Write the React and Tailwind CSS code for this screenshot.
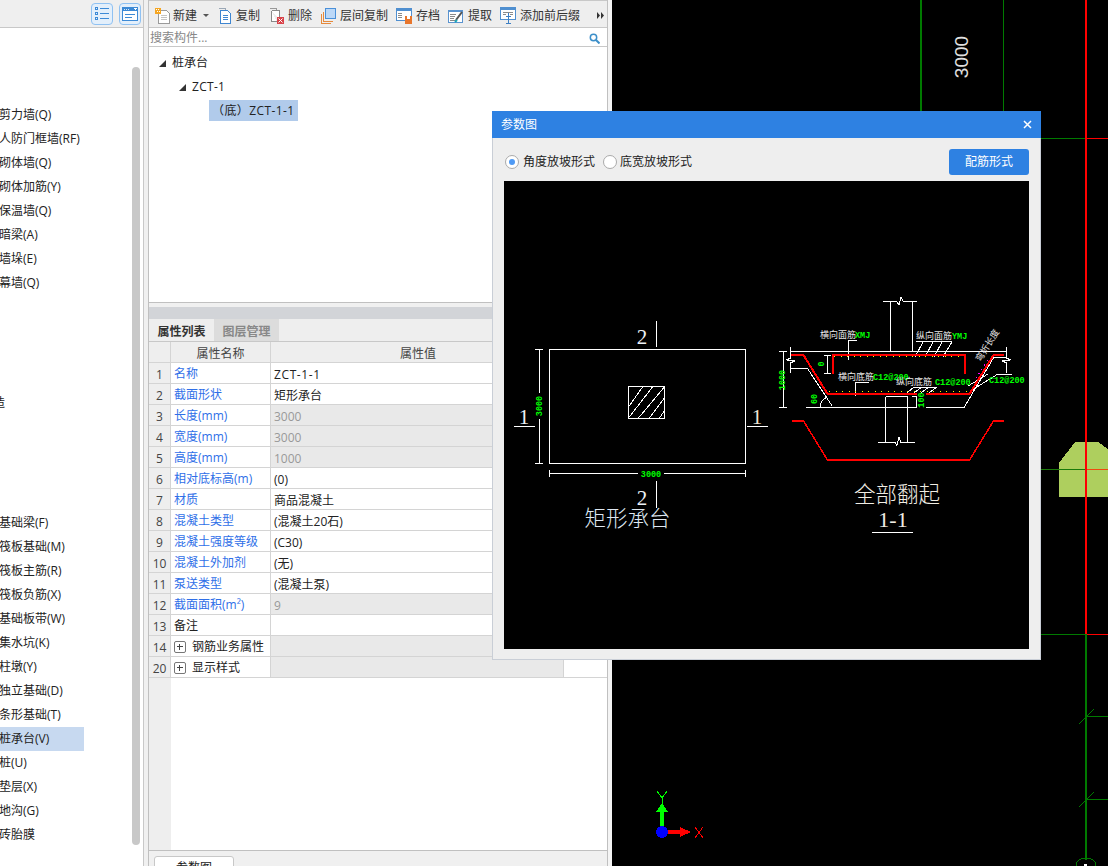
import React from 'react'

const LEFT_ROWS = [
  '剪力墙(Q)', '人防门框墙(RF)', '砌体墙(Q)', '砌体加筋(Y)', '保温墙(Q)', '暗梁(A)', '墙垛(E)', '幕墙(Q)',
  '', '', '', '', '造', '', '', '', '',
  '基础梁(F)', '筏板基础(M)', '筏板主筋(R)', '筏板负筋(X)', '基础板带(W)', '集水坑(K)', '柱墩(Y)', '独立基础(D)',
  '条形基础(T)', '桩承台(V)', '桩(U)', '垫层(X)', '地沟(G)', '砖胎膜',
]

const PROPS = [
  { n: 1, name: '名称', value: 'ZCT-1-1', wide: true },
  { n: 2, name: '截面形状', value: '矩形承台' },
  { n: 3, name: '长度(mm)', value: '3000', off: true },
  { n: 4, name: '宽度(mm)', value: '3000', off: true },
  { n: 5, name: '高度(mm)', value: '1000', off: true },
  { n: 6, name: '相对底标高(m)', value: '(0)' },
  { n: 7, name: '材质', value: '商品混凝土' },
  { n: 8, name: '混凝土类型', value: '(混凝土20石)' },
  { n: 9, name: '混凝土强度等级', value: '(C30)' },
  { n: 10, name: '混凝土外加剂', value: '(无)' },
  { n: 11, name: '泵送类型', value: '(混凝土泵)' },
  { n: 12, name: '截面面积(m²)', value: '9', off: true },
  { n: 13, name: '备注', value: '', black: true },
  { n: 14, name: '钢筋业务属性', group: true },
  { n: 20, name: '显示样式', group: true },
]

function IconNew() {
  return (
    <svg width="16" height="18" viewBox="0 0 16 18" shapeRendering="crispEdges">
      <path d="M3.5 3.5h8l3 3v10h-11z" fill="#fff" stroke="#9a9a9a" />
      <path d="M6 8.5h6M6 10.5h6M6 12.5h6" stroke="#c4c4c4" />
      <rect x="0" y="1" width="6" height="6" fill="#f5a623" />
      <path d="M1 2h1v1H1zM3 2h1v1H3zM2 4h1v1H2zM4 4h1v1H4z" fill="#fff" />
    </svg>
  )
}

function IconCopy() {
  return (
    <svg width="14" height="16" viewBox="0 0 14 16" shapeRendering="crispEdges">
      <path d="M0.5 0.5h7v2" fill="none" stroke="#9aa7b5" />
      <path d="M2.5 2.5h7l3 3v10h-10z" fill="#fff" stroke="#3f86d0" />
      <path d="M5 7.5h5M5 9.5h5M5 11.5h5" stroke="#3f86d0" />
    </svg>
  )
}

function IconDelete() {
  return (
    <svg width="15" height="16" viewBox="0 0 15 16" shapeRendering="crispEdges">
      <path d="M0.5 0.5h7v2" fill="none" stroke="#999" />
      <path d="M2.5 2.5h8v9M2.5 2.5v11h5" fill="#fff" stroke="#8a8a8a" />
      <rect x="8" y="9" width="7" height="7" fill="#d9434a" />
      <path d="M9.5 10.5l4 4M13.5 10.5l-4 4" stroke="#fff" shapeRendering="auto" />
    </svg>
  )
}

function IconFloorCopy() {
  return (
    <svg width="15" height="16" viewBox="0 0 15 16" shapeRendering="crispEdges">
      <path d="M0.5 6v9.5h9M2.5 4v9.5h9" fill="none" stroke="#e68a3c" />
      <rect x="4.5" y="0.5" width="10" height="10" fill="#bcd8f7" stroke="#4a90d9" />
    </svg>
  )
}

function IconSave() {
  return (
    <svg width="16" height="16" viewBox="0 0 16 16" shapeRendering="crispEdges">
      <rect x="0.5" y="0.5" width="15" height="12" fill="#fff" stroke="#4f8fd0" />
      <rect x="0" y="0" width="16" height="3" fill="#4f8fd0" />
      <path d="M2 5.5h4M2 7.5h4M2 9.5h4" stroke="#8a8a8a" />
      <rect x="9" y="8" width="7" height="8" fill="#e8762c" />
      <rect x="11" y="8" width="3" height="3" fill="#fff" />
    </svg>
  )
}

function IconExtract() {
  return (
    <svg width="16" height="16" viewBox="0 0 16 16" shapeRendering="crispEdges">
      <rect x="0.5" y="2.5" width="14" height="12" fill="#fff" stroke="#5a93cf" />
      <rect x="0" y="2" width="15" height="2" fill="#5a93cf" />
      <path d="M2 6.5h6M2 8.5h5M2 10.5h4M2 12.5h6" stroke="#8a8a8a" />
      <path d="M8 12l6-8" stroke="#555" strokeWidth="2" shapeRendering="auto" />
      <path d="M7 14l2-2" stroke="#19a8b8" strokeWidth="2" shapeRendering="auto" />
    </svg>
  )
}

function IconSuffix() {
  return (
    <svg width="16" height="17" viewBox="0 0 16 17" shapeRendering="crispEdges">
      <rect x="0.5" y="0.5" width="15" height="12" fill="#fff" stroke="#4f8fd0" />
      <rect x="0" y="0" width="16" height="3" fill="#4f8fd0" />
      <path d="M3 5.5h10M3 7.5h3M10 7.5h3" stroke="#8a8a8a" />
      <path d="M8.5 6v10M6 16.5h5M6 9.5h5" stroke="#3d7fc4" />
    </svg>
  )
}

function ToolItem({ icon, label, className }) {
  return (
    <div className={`flex items-center shrink-0 ${className}`}>
      {icon}
      <span className="whitespace-nowrap">{label}</span>
    </div>
  )
}

function Toolbar() {
  return (
    <div className="h-[28px] shrink-0 border-t border-b border-[#c8c8c8] bg-[#eeeeee] flex items-center text-[12px] text-[#333] pl-[6px] pt-[3px]">
      <ToolItem icon={<IconNew />} label="新建" className="gap-[2px] w-[48px]" />
      <svg width="6" height="4" viewBox="0 0 6 4" className="mr-[9px]"><path d="M0 0h6L3 3z" fill="#555" /></svg>
      <ToolItem icon={<IconCopy />} label="复制" className="gap-[4px] w-[51px]" />
      <ToolItem icon={<IconDelete />} label="删除" className="gap-[4px] w-[52px]" />
      <ToolItem icon={<IconFloorCopy />} label="层间复制" className="gap-[4px] w-[75px]" />
      <ToolItem icon={<IconSave />} label="存档" className="gap-[4px] w-[52px]" />
      <ToolItem icon={<IconExtract />} label="提取" className="gap-[4px] w-[52px]" />
      <ToolItem icon={<IconSuffix />} label="添加前后缀" className="gap-[4px] w-[97px]" />
      <svg width="7" height="7" viewBox="0 0 7 7"><path d="M0 0l3 3.5L0 7zM4 0l3 3.5L4 7z" fill="#333" /></svg>
    </div>
  )
}

function TreeArrow() {
  return (
    <svg width="7" height="7" viewBox="0 0 7 7" className="shrink-0"><path d="M7 0v7H0z" fill="#333" /></svg>
  )
}

function PropRow({ row }) {
  const valueBg = row.off || row.group ? 'bg-[#e9e9e9]' : 'bg-white'
  const nameColor = row.group || row.black ? 'text-[#222]' : 'text-[#2f6fe8]'
  return (
    <div className="flex h-[21px] shrink-0 border-b border-[#d4d4d4] leading-[23px]">
      <div className="w-[22px] shrink-0 bg-[#eeeeee] border-r border-[#d4d4d4] text-center text-[#444]">{row.n}</div>
      <div className={`w-[100px] shrink-0 border-r border-[#d4d4d4] bg-white whitespace-nowrap overflow-hidden flex items-center pl-[3px] pt-[1px] ${nameColor}`}>
        {row.group && (
          <span className="w-[12px] h-[12px] border border-[#777] rounded-[2px] mr-[6px] flex items-center justify-center shrink-0">
            <svg width="6" height="6" viewBox="0 0 6 6" shapeRendering="crispEdges"><path d="M0 2.5h6M2.5 0v6" stroke="#444" /></svg>
          </span>
        )}
        {row.name}
      </div>
      {row.group ? (
        <>
          <div className="w-[293px] shrink-0 bg-[#e9e9e9] border-r border-[#d4d4d4]" />
          <div className="flex-1 bg-white" />
        </>
      ) : (
        <div className={`flex-1 pl-[3px] ${valueBg} ${row.off ? 'text-[#999]' : 'text-[#222]'} ${row.wide ? 'tracking-[0.6px]' : ''}`}>{row.value}</div>
      )}
    </div>
  )
}

function CanvasLines() {
  return (
    <svg className="block w-full h-full" viewBox="612 0 496 866" shapeRendering="crispEdges">
      <path d="M921 0v111" stroke="#007a00" strokeWidth="2" fill="none" />
      <path d="M1003.5 0v111" stroke="#007a00" strokeWidth="1" fill="none" />
      <path d="M1041 138.5h45" stroke="#007a00" fill="none" />
      <path d="M1086 138.5h22" stroke="#ff0000" fill="none" />
      <polygon points="1059,463 1075,442 1098,442 1108,449 1108,497 1059,497" fill="#aecf5e" />
      <path d="M1041 469.5h45" stroke="#1a7a0a" fill="none" />
      <path d="M1086 469.5h22" stroke="#f04a10" fill="none" />
      <path d="M1086 0v634" stroke="#ff0000" strokeWidth="2" fill="none" />
      <path d="M1041 634.5h45" stroke="#007a00" fill="none" />
      <path d="M1086 634.5h22" stroke="#ff0000" fill="none" />
      <path d="M1086 634v226" stroke="#007a00" strokeWidth="2" fill="none" />
      <path d="M1086 716.5h22M1079 724l15-15M1086 799.5h22M1079 807l15-15" stroke="#007a00" fill="none" />
      <path d="M1076 866c0-5 4-8 10-8s10 3 10 8" stroke="#007a00" fill="none" />
      <rect x="1084" y="864" width="3" height="2" fill="#fff" />
      <text x="968" y="57" textAnchor="middle" transform="rotate(-90 968 57)" className="fill-[#e0e0e0] text-[19px] font-['Liberation_Sans',sans-serif]">3000</text>

      <path d="M660 826v-14h-4l6-9 6 9h-4v14z" fill="#00ff00" />
      <path d="M657 791l5 7 5-7M662 798v6" stroke="#00ff00" fill="none" />
      <path d="M668 830h12v-3l11 5-11 5v-3h-12z" fill="#ff0000" />
      <circle cx="662" cy="832" r="6" fill="#0000ff" />
      <path d="M695 827l8 11M703 827l-8 11" stroke="#ff0000" fill="none" />
    </svg>
  )
}

function ParamDrawing() {
  const cadText = "font-['Liberation_Serif','Noto_Sans_CJK_SC',serif]"
  const cjkText = "font-['Noto_Sans_CJK_SC',sans-serif]"
  const dimText = "fill-[#00ff00] font-['Liberation_Mono',monospace] font-bold text-[8.5px]"
  const noteText = `fill-[#e8e8e8] ${cjkText} text-[9px]`
  return (
    <svg className="block w-[525px] h-[468px]" viewBox="504 181 525 468" shapeRendering="crispEdges">
      {/* 矩形承台 plan */}
      <g stroke="#fff" fill="none">
        <rect x="549.5" y="349.5" width="196" height="114" />
        <rect x="628.5" y="386.5" width="36" height="32" />
        <path d="M656.5 321v26M656.5 481v27M514 426.5h21M747 426.5h21" />
        <path d="M539.5 349v115M535 349.5h8M535 463.5h8M549 473.5h197M549.5 470v7M745.5 470v7" />
        <path d="M628.5 407l14-20M628.5 418l24-31M638 418.5l26-31M649 418.5l15-20M659 418.5l5-7" strokeWidth="1" />
      </g>
      <rect x="534" y="393" width="11" height="26" fill="#000" />
      <rect x="638" y="469" width="26" height="9" fill="#000" />
      <text x="542" y="406" textAnchor="middle" transform="rotate(-90 542 406)" className={dimText}>3000</text>
      <text x="651" y="477" textAnchor="middle" className={dimText}>3000</text>
      <text x="642" y="344" textAnchor="middle" className={`fill-[#eef2f7] text-[21px] ${cadText}`}>2</text>
      <text x="642" y="505" textAnchor="middle" className={`fill-[#eef2f7] text-[21px] ${cadText}`}>2</text>
      <text x="524" y="424" textAnchor="middle" className={`fill-[#eef2f7] text-[21px] ${cadText}`}>1</text>
      <text x="757" y="424" textAnchor="middle" className={`fill-[#f0e6d6] text-[21px] ${cadText}`}>1</text>
      <text x="627.5" y="526" textAnchor="middle" className={`fill-[#dfe8f2] text-[21.5px] ${cjkText} font-light`}>矩形承台</text>

      {/* 1-1 section */}
      <g stroke="#fff" fill="none">
        <path d="M883 301.5h13.5l2.5 3.5 2-8 2.5 4.5h13.5" />
        <path d="M890.5 302v49M912.5 302v49" />
        <path d="M790.5 351.5h216" />
        <path d="M783.5 352v55M779 351.5h8M779 407.5h8" />
        <path d="M790.5 347v11l-4 2 8 1-4 2v10M790 368.5h17.5l25 38" />
        <path d="M806 407.5h158l30-50.5h12.5M1006.5 347v11l4 2-8 1 4 2v10" />
        <path d="M885.5 397v46M907.5 397v46M885.5 396.5h22" />
        <path d="M878 442.5h17l2 3 2-8 2 5h14" />
        <path d="M916.5 397v10M912 396.5h8" />
        <path d="M827.5 355v18M824 355.5h7M824 373.5h7" />
        <path d="M820 407c0-4 3-8 7-10" />
        <path d="M848.5 360v-19.5h8" />
        <path d="M916 341.5h36M915 357l8-15M925 357l8-15M934 357l8-15M943 357l9-15" />
        <path d="M855.5 396v-14h13" />
        <path d="M914 387.5h23M907 393l7-6M914 393l8-6M921 393l8-6M929 393l8-6" />
        <path d="M972 390l26-16h14M968 386l20-12" />
        <path d="M872 532.5h41" />
      </g>
      <path d="M791 355h12.5l24 39h142l24-39H1004" stroke="#ff0000" strokeWidth="2" fill="none" />
      <path d="M833 373.5V355h132v18.5" stroke="#ff0000" strokeWidth="2" fill="none" />
      <path d="M792 421h11.5l24 39h142l24-39H1004" stroke="#ff0000" strokeWidth="1.5" fill="none" />
      <path d="M834 356.5h130" stroke="#ffff00" strokeDasharray="1 5.5" fill="none" />
      <path d="M829 391.5h138" stroke="#ffff00" strokeDasharray="1 5.5" fill="none" />
      <path d="M976 378l13-20" stroke="#ff00ff" strokeDasharray="1 4" fill="none" />

      <text x="785" y="380" textAnchor="middle" transform="rotate(-90 785 380)" className={dimText}>1000</text>
      <rect x="917" y="393" width="9" height="15" fill="#000" />
      <text x="924" y="400" textAnchor="middle" transform="rotate(-90 924 400)" className={dimText}>100</text>
      <text x="824" y="364" textAnchor="middle" transform="rotate(-90 824 364)" className={dimText}>0</text>
      <text x="817" y="399" textAnchor="middle" transform="rotate(-90 817 399)" className={dimText}>60</text>

      <text x="820" y="338" className={noteText}>横向面筋</text>
      <text x="855" y="338" className={dimText}>XMJ</text>
      <text x="916" y="339" className={noteText}>纵向面筋</text>
      <text x="952" y="339" className={dimText}>YMJ</text>
      <text x="838" y="380" className={noteText}>横向底筋</text>
      <text x="873" y="380" className={dimText}>C12@200</text>
      <text x="896" y="385" className={noteText}>纵向底筋</text>
      <text x="935" y="385" className={dimText}>C12@200</text>
      <text x="989" y="383" className={dimText}>C12@200</text>
      <text x="990" y="347" textAnchor="middle" transform="rotate(-58 990 347)" className={noteText}>弯折长度</text>

      <text x="897" y="502" textAnchor="middle" className={`fill-[#f0ede4] text-[21.5px] ${cjkText} font-light`}>全部翻起</text>
      <text x="893" y="527" textAnchor="middle" className={`fill-[#f0ede4] text-[22px] ${cadText}`}>1-1</text>
    </svg>
  )
}

function ParamDialog() {
  return (
    <div className="absolute left-[492px] top-[111px] w-[549px] h-[549px] bg-[#eeeeee] border-r border-b border-l border-[#c9ced6] flex flex-col">
      <div className="h-[27px] bg-[#2e81e2] text-white text-[12px] flex items-center justify-between pl-[9px] pr-[9px] -mx-px shrink-0">
        <span>参数图</span>
        <svg width="9" height="9" viewBox="0 0 9 9"><path d="M1 1l7 7M8 1l-7 7" stroke="#fff" strokeWidth="1.5" /></svg>
      </div>
      <div className="h-[43px] shrink-0 flex items-center pl-[12px] pr-[11px] pt-[4px] text-[12px] text-[#222]">
        <span className="w-[14px] h-[14px] rounded-full border border-[#aaa] bg-white flex items-center justify-center mr-[4px]">
          <span className="w-[6px] h-[6px] rounded-full bg-[#4f9af5]" />
        </span>
        <span className="mr-[8px]">角度放坡形式</span>
        <span className="w-[14px] h-[14px] rounded-full border border-[#aaa] bg-white mr-[3px]" />
        <span>底宽放坡形式</span>
        <button className="ml-auto w-[80px] h-[26px] rounded-[3px] bg-[#2e81e2] text-white text-[12px]">配筋形式</button>
      </div>
      <div className="mx-[11px] bg-black h-[468px]">
        <ParamDrawing />
      </div>
    </div>
  )
}

export default function App() {
  return (
    <div className="relative w-[1108px] h-[866px] overflow-hidden flex bg-[#f0f0f0] text-[12px] text-[#222] font-['Open_Sans','Noto_Sans_CJK_SC',sans-serif]">
      {/* component type list */}
      <aside className="relative w-[144px] shrink-0 bg-white border-r border-[#c8c8c8] flex flex-col overflow-hidden">
        <div className="h-[28px] shrink-0 bg-[#efefef] border-b border-[#c8c8c8] flex items-center justify-end gap-[6px] pr-[2px]">
          <button className="w-[22px] h-[22px] rounded-[4px] border border-[#8fc1f2] bg-[#e3effb] flex items-center justify-center">
            <svg width="14" height="13" viewBox="0 0 14 13" shapeRendering="crispEdges">
              <path d="M5 1.5h9M5 6.5h9M5 11.5h9" stroke="#3d8ad6" />
              <path d="M0.5 0.5h2v2h-2zM0.5 5.5h2v2h-2zM0.5 10.5h2v2h-2z" fill="none" stroke="#3d8ad6" />
            </svg>
          </button>
          <button className="w-[22px] h-[22px] rounded-[4px] border border-[#8fc1f2] bg-[#e3effb] flex items-center justify-center">
            <svg width="16" height="14" viewBox="0 0 16 14" shapeRendering="crispEdges">
              <rect x="0.5" y="0.5" width="15" height="13" fill="#fff" stroke="#3d8ad6" />
              <rect x="0" y="0" width="16" height="4" fill="#3d8ad6" />
              <path d="M2 2h1M4 2h1M6 2h1M12 1h3l-1.5 2z" stroke="#fff" strokeWidth="0.8" fill="#fff" />
              <path d="M3 7.5h10M3 10.5h7" stroke="#3d8ad6" />
            </svg>
          </button>
        </div>
        <div className="pt-[75px]">
          {LEFT_ROWS.map((label, i) => (
            <div
              key={i}
              className={`h-[24px] leading-[24px] w-[85px] whitespace-nowrap ${label === '造' ? '-ml-[7px]' : '-ml-[1px]'} ${label === '桩承台(V)' ? 'bg-[#c7d9f0]' : ''}`}
            >
              {label}
            </div>
          ))}
        </div>
        <div className="absolute left-[132px] top-[67px] w-[8px] h-[778px] rounded-[4px] bg-[#c8c8c8]" />
      </aside>

      {/* component tree and properties */}
      <section className="ml-[4px] w-[460px] shrink-0 flex flex-col border-l border-r border-[#c0c0c0] bg-[#f0f0f0]">
        <Toolbar />
        <div className="h-[19px] shrink-0 bg-white border-b border-[#c8c8c8] flex items-center justify-between pl-[1px] pr-[7px] pt-[2px] text-[#888]">
          <span>搜索构件...</span>
          <svg width="11" height="11" viewBox="0 0 11 11" fill="none">
            <circle cx="4.5" cy="4.5" r="3.2" stroke="#3d8fc9" strokeWidth="1.5" />
            <path d="M7 7l3.5 3.5" stroke="#3d8fc9" strokeWidth="2" />
          </svg>
        </div>
        <div className="h-[256px] shrink-0 bg-white border-b border-[#c0c0c0] text-[#222]">
          <div className="h-[24px] mt-[4px] pl-[10px] flex items-center gap-[6px]"><TreeArrow />桩承台</div>
          <div className="h-[24px] pl-[30px] flex items-center gap-[6px] tracking-[0.3px]"><TreeArrow />ZCT-1</div>
          <div className="ml-[60px] mt-[1px] w-[89px] h-[21px] bg-[#b1cbeb] flex items-center whitespace-nowrap pl-[3px] pt-[1px] tracking-[0.4px]">（底）ZCT-1-1</div>
        </div>
        <div className="h-[4px] shrink-0" />
        <div className="h-[12px] shrink-0 bg-[#d2d4d8]" />
        <div className="h-[23px] shrink-0 flex bg-[#eeeeee] border-b border-[#c8c8c8]">
          <div className="w-[65px] flex items-center justify-center pt-[4px] font-bold text-[#333]">属性列表</div>
          <div className="w-[65px] flex items-center justify-center pt-[4px] font-bold text-[#888] bg-[#dcdcdc]">图层管理</div>
        </div>
        <div className="flex h-[21px] shrink-0 border-b border-[#d4d4d4] bg-[#eeeeee] text-[#444] leading-[23px]">
          <div className="w-[22px] border-r border-[#d4d4d4]" />
          <div className="w-[100px] text-center border-r border-[#d4d4d4]">属性名称</div>
          <div className="w-[294px] text-center">属性值</div>
        </div>
        {PROPS.map(row => <PropRow key={row.n} row={row} />)}
        <div className="flex-1 flex bg-white border-b border-[#c0c0c0]">
          <div className="w-[22px] bg-[#eeeeee]" />
        </div>
        <div className="h-[15px] shrink-0 overflow-hidden pl-[5px] pt-[5px]">
          <div className="w-[80px] h-[24px] bg-white border border-[#c8c8c8] rounded-t-[3px] text-center leading-[22px]">参数图</div>
        </div>
      </section>

      <div className="w-[4px] shrink-0 bg-[#f4f4f4]" />

      {/* drawing area */}
      <main className="flex-1 bg-black">
        <CanvasLines />
      </main>

      <ParamDialog />
    </div>
  )
}
